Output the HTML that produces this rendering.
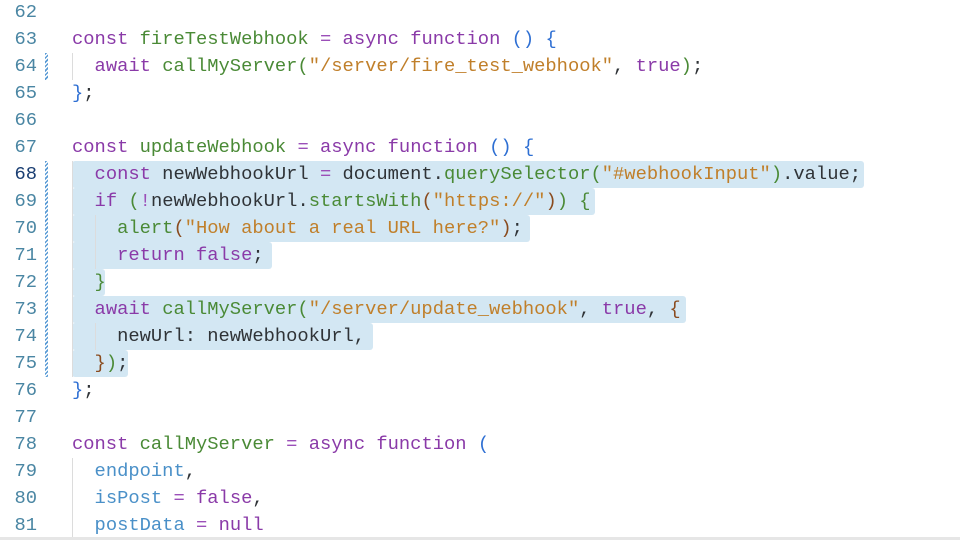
<!DOCTYPE html>
<html><head><meta charset="utf-8"><style>
html,body{margin:0;padding:0;background:#fff;width:960px;height:540px;overflow:hidden;position:relative}
.l{position:absolute;left:0;height:27px;line-height:27px;font-family:"Liberation Mono","DejaVu Sans Mono",monospace;font-size:18.8px;color:#2f3337;white-space:pre}
.n{position:absolute;left:0;width:37px;text-align:right;color:#4a86a3}
.c{position:absolute;left:72px}
.sel{position:absolute;left:72px;height:27px;background:#d3e7f3;border-radius:3px}
.k{color:#8a3aa8}.o{color:#9b4fb8}.f{color:#4a8a36}.s{color:#c07f2a}.p{color:#4a90c8}.q{color:#2e6fd3}.b{color:#8a4b1e}
.g{position:absolute;width:1px;background:#dcdcdc}
.m{position:absolute;left:45px;width:3px;height:27px;background:repeating-linear-gradient(135deg,#5a9bd5 0 1.5px,#fff 1.5px 3px)}
</style></head><body>
<div class="sel" style="top:161px;width:792px"></div>
<div class="sel" style="top:188px;width:523px"></div>
<div class="sel" style="top:215px;width:458px"></div>
<div class="sel" style="top:242px;width:200px"></div>
<div class="sel" style="top:269px;width:33px"></div>
<div class="sel" style="top:296px;width:614px"></div>
<div class="sel" style="top:323px;width:301px"></div>
<div class="sel" style="top:350px;width:56px"></div>
<div class="g" style="left:72px;top:53px;height:27px"></div>
<div class="g" style="left:72px;top:161px;height:216px"></div>
<div class="g" style="left:95px;top:215px;height:54px"></div>
<div class="g" style="left:95px;top:323px;height:27px"></div>
<div class="g" style="left:72px;top:458px;height:82px"></div>
<div class="m" style="top:53px"></div>
<div class="m" style="top:161px;height:216px"></div>
<div class="l" style="top:-1px"><span class="n">62</span></div>
<div class="l" style="top:26px"><span class="n">63</span><span class="c"><span class="k">const</span> <span class="f">fireTestWebhook</span> <span class="o">=</span> <span class="k">async</span> <span class="k">function</span> <span class="q">()</span> <span class="q">{</span></span></div>
<div class="l" style="top:53px"><span class="n">64</span><span class="c">  <span class="k">await</span> <span class="f">callMyServer(</span><span class="s">"/server/fire_test_webhook"</span>, <span class="k">true</span><span class="f">)</span>;</span></div>
<div class="l" style="top:80px"><span class="n">65</span><span class="c"><span class="q">}</span>;</span></div>
<div class="l" style="top:107px"><span class="n">66</span></div>
<div class="l" style="top:134px"><span class="n">67</span><span class="c"><span class="k">const</span> <span class="f">updateWebhook</span> <span class="o">=</span> <span class="k">async</span> <span class="k">function</span> <span class="q">()</span> <span class="q">{</span></span></div>
<div class="l" style="top:161px"><span class="n" style="color:#1b3f73">68</span><span class="c">  <span class="k">const</span> newWebhookUrl <span class="o">=</span> document.<span class="f">querySelector(</span><span class="s">"#webhookInput"</span><span class="f">)</span>.value;</span></div>
<div class="l" style="top:188px"><span class="n">69</span><span class="c">  <span class="k">if</span> <span class="f">(</span><span class="o">!</span>newWebhookUrl.<span class="f">startsWith</span><span class="b">(</span><span class="s">"https://"</span><span class="b">)</span><span class="f">)</span> <span class="f">{</span></span></div>
<div class="l" style="top:215px"><span class="n">70</span><span class="c">    <span class="f">alert</span><span class="b">(</span><span class="s">"How about a real URL here?"</span><span class="b">)</span>;</span></div>
<div class="l" style="top:242px"><span class="n">71</span><span class="c">    <span class="k">return</span> <span class="k">false</span>;</span></div>
<div class="l" style="top:269px"><span class="n">72</span><span class="c">  <span class="f">}</span></span></div>
<div class="l" style="top:296px"><span class="n">73</span><span class="c">  <span class="k">await</span> <span class="f">callMyServer(</span><span class="s">"/server/update_webhook"</span>, <span class="k">true</span>, <span class="b">{</span></span></div>
<div class="l" style="top:323px"><span class="n">74</span><span class="c">    newUrl: newWebhookUrl,</span></div>
<div class="l" style="top:350px"><span class="n">75</span><span class="c">  <span class="b">}</span><span class="f">)</span>;</span></div>
<div class="l" style="top:377px"><span class="n">76</span><span class="c"><span class="q">}</span>;</span></div>
<div class="l" style="top:404px"><span class="n">77</span></div>
<div class="l" style="top:431px"><span class="n">78</span><span class="c"><span class="k">const</span> <span class="f">callMyServer</span> <span class="o">=</span> <span class="k">async</span> <span class="k">function</span> <span class="q">(</span></span></div>
<div class="l" style="top:458px"><span class="n">79</span><span class="c">  <span class="p">endpoint</span>,</span></div>
<div class="l" style="top:485px"><span class="n">80</span><span class="c">  <span class="p">isPost</span> <span class="o">=</span> <span class="k">false</span>,</span></div>
<div class="l" style="top:512px"><span class="n">81</span><span class="c">  <span class="p">postData</span> <span class="o">=</span> <span class="k">null</span></span></div>
<div style="position:absolute;left:0;top:537px;width:960px;height:3px;background:#e6e6e6"></div>
</body></html>
